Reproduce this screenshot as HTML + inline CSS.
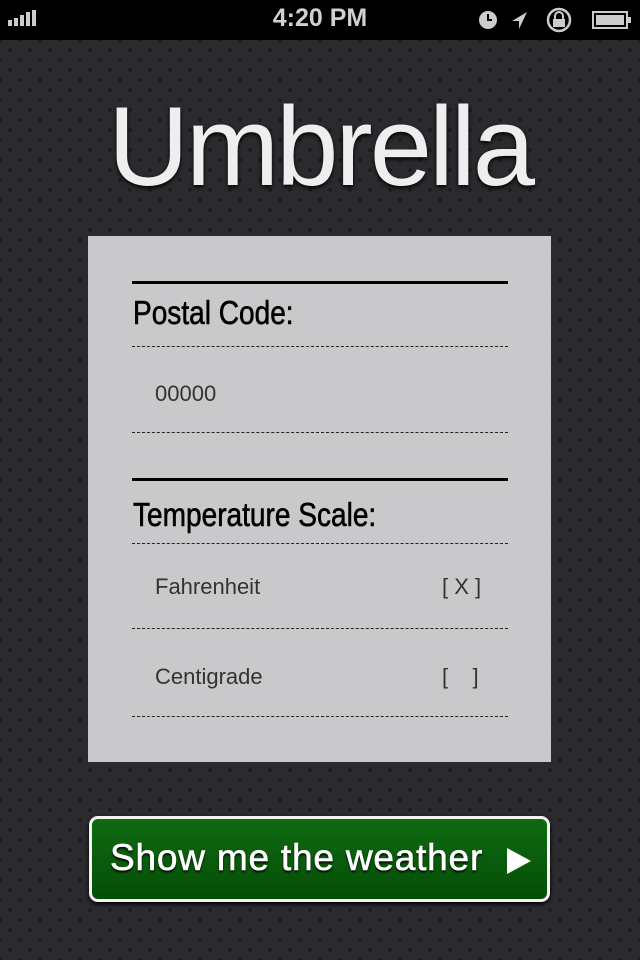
<!DOCTYPE html><html><head><style>
body{margin:0;width:640px;height:960px;overflow:hidden;background-color:#2b2b2f;background-image:radial-gradient(circle,#1c1c1f 1.6px,transparent 2.2px),radial-gradient(circle,#1c1c1f 1.6px,transparent 2.2px);background-size:20px 20px;background-position:0 0,10px 10px;font-family:"Liberation Sans",sans-serif;position:relative}
.sb{position:absolute;left:0;top:0;width:640px;height:40px;background:#000;color:#ccc}
.t{position:absolute;left:0;width:640px;top:4px;text-align:center;font-weight:bold;font-size:25px;color:#d0d0d0}
h1{position:absolute;left:0;width:640px;top:82px;margin:0;text-align:center;font-size:112px;font-weight:normal;color:#eee;letter-spacing:-3px;text-shadow:0 2px 4px #000}
.card{position:absolute;left:88px;top:236px;width:463px;height:526px;background:#c9c9cb}
.s{position:absolute;left:132px;width:376px;height:3px;background:#000}
.d{position:absolute;left:132px;width:376px;border-top:1.5px dashed #222}
.h{position:absolute;left:133px;font-family:"Liberation Sans Narrow","Liberation Sans",sans-serif;font-size:33px;color:#000;transform:scaleX(.85);transform-origin:left;-webkit-text-stroke:0.6px #000}
.v{position:absolute;left:155px;font-size:22px;color:#333}
.btn{position:absolute;left:89px;top:816px;width:455px;height:80px;border:3px solid #f2f2f2;border-radius:9px;background:linear-gradient(#0f6b12,#054d07);box-shadow:0 2px 4px #000}
.btn span{position:absolute;left:18px;top:18px;font-size:37px;color:#fff;letter-spacing:0.8px;-webkit-text-stroke:0.6px #fff;text-shadow:0 2px 2px #000}
</style></head><body>
<div class="sb">
<svg style="position:absolute;left:8px;top:10px" width="40" height="20"><rect x="0" y="10" width="4" height="6" fill="#ccc"/><rect x="6" y="8" width="4" height="8" fill="#ccc"/><rect x="12" y="5" width="4" height="11" fill="#ccc"/><rect x="18" y="2" width="4" height="14" fill="#ccc"/><rect x="24" y="0" width="4" height="16" fill="#ccc"/></svg>
<div class="t">4:20 PM</div>
<svg style="position:absolute;left:475px;top:7px" width="160" height="26"><circle cx="13" cy="13" r="9" fill="#ccc"/><path d="M13 7v6h4" stroke="#000" stroke-width="2" fill="none"/><path d="M52 5L37 14h7v8z" fill="#ccc"/><circle cx="84" cy="13" r="11" stroke="#ccc" stroke-width="2.5" fill="none"/><rect x="78" y="12" width="12" height="8" fill="#ccc"/><path d="M80 12v-3a4 4 0 0 1 8 0v3" stroke="#ccc" stroke-width="2" fill="none"/><rect x="118" y="5" width="34" height="16" stroke="#ccc" stroke-width="2" fill="none"/><rect x="121" y="8" width="28" height="10" fill="#ccc"/><rect x="153" y="10" width="3" height="6" fill="#ccc"/></svg>
</div>
<h1>Umbrella</h1>
<div class="card"></div>
<div class="s" style="top:281px"></div>
<div class="h" style="top:294px">Postal Code:</div>
<div class="d" style="top:346px"></div>
<div class="v" style="top:381px">00000</div>
<div class="d" style="top:432px"></div>
<div class="s" style="top:478px"></div>
<div class="h" style="top:496px">Temperature Scale:</div>
<div class="d" style="top:543px"></div>
<div class="v" style="top:574px">Fahrenheit</div>
<div class="v" style="top:574px;left:442px">[ X ]</div>
<div class="d" style="top:628px"></div>
<div class="v" style="top:664px">Centigrade</div>
<div class="v" style="top:664px;left:442px">[&nbsp;&nbsp;&nbsp;&nbsp;]</div>
<div class="d" style="top:716px"></div>
<div class="btn"><span>Show me the weather</span>
<svg style="position:absolute;left:413px;top:28px" width="28" height="28"><path d="M2 1L26 14L2 27z" fill="#fff"/></svg></div>
</body></html>
